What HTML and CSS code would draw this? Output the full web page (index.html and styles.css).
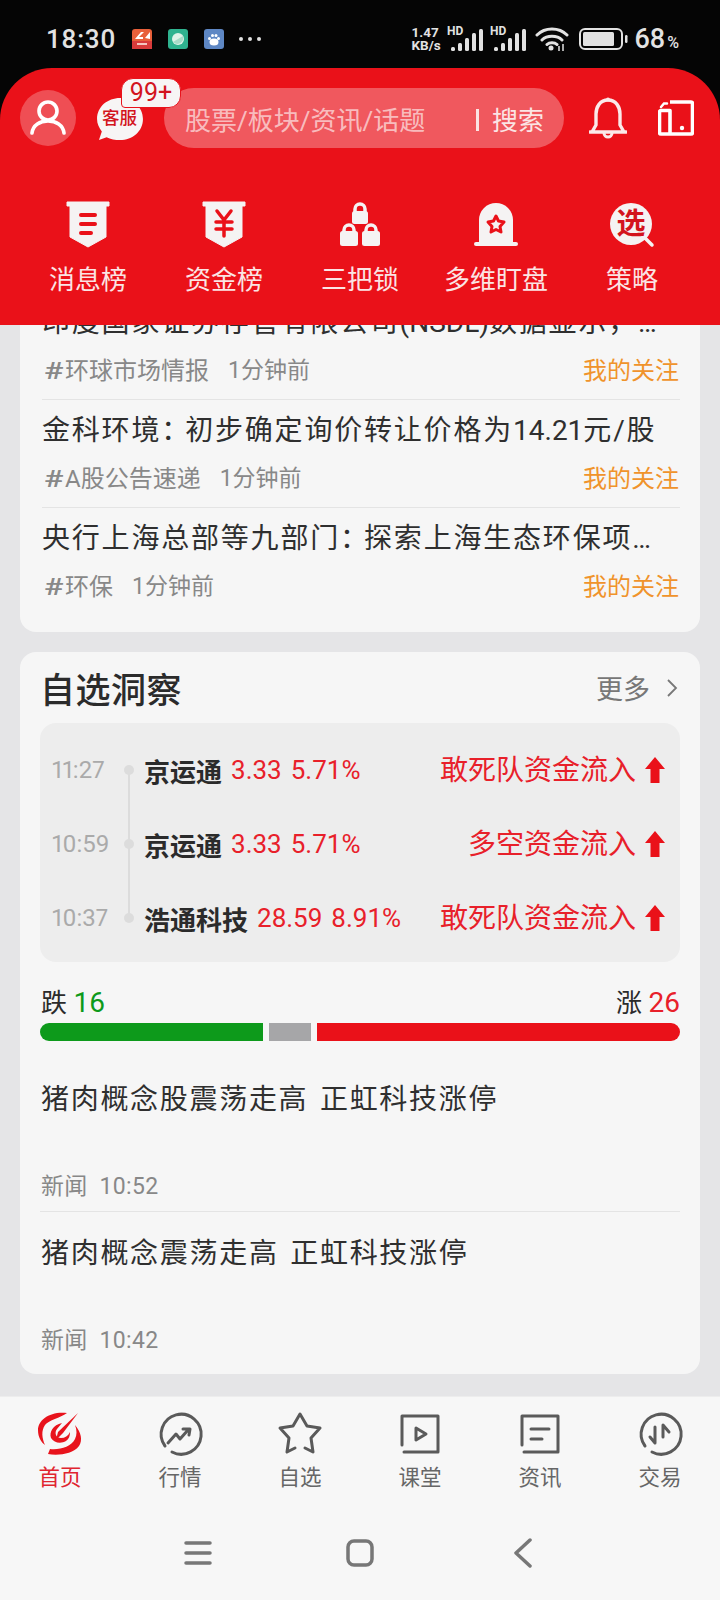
FILE: index.html
```html
<!DOCTYPE html>
<html lang="zh-CN">
<head>
<meta charset="utf-8">
<title>首页</title>
<link rel="stylesheet" href="styles.css">
</head>
<body>
<div class="phone">
  <div class="top">
    <div class="status">
      <span class="clock">18:30</span>
      <div class="apps">
        <svg class="app" viewBox="0 0 20 20"><rect width="20" height="20" rx="3" fill="#e8603a"/><rect y="12" width="20" height="8" fill="#d93b3b"/><path d="M3 10 L9 3 H12 L7 8 H11 V10 Z M13 9 L18 3 V10 Z" fill="#fff"/><rect x="5" y="14" width="10" height="2" fill="#f5c6c0"/></svg>
        <svg class="app" viewBox="0 0 20 20"><rect width="20" height="20" rx="3" fill="#2fb38f"/><circle cx="10" cy="10" r="6" fill="#dff3e8"/><path d="M5 13 A6 6 0 0 0 15 7 Z" fill="#a8dcc8"/></svg>
        <svg class="app" viewBox="0 0 20 20"><rect width="20" height="20" rx="3" fill="#5e87c4"/><ellipse cx="10" cy="13" rx="4.5" ry="3.5" fill="#fff"/><circle cx="5.5" cy="9.5" r="1.5" fill="#fff"/><circle cx="8.5" cy="6.5" r="1.5" fill="#fff"/><circle cx="12" cy="6.5" r="1.5" fill="#fff"/><circle cx="14.5" cy="9.5" r="1.5" fill="#fff"/></svg>
        <span class="dots"><i></i><i></i><i></i></span>
      </div>
      <div class="sys">
        <span class="speed">1.47<br>KB/s</span>
        <svg class="signal" viewBox="0 0 36 26"><text x="0" y="9" class="hd">HD</text><rect x="4" y="21" width="4" height="4" rx="1.5"/><rect x="11" y="17" width="4" height="8" rx="1.5"/><rect x="18" y="12" width="4" height="13" rx="1.5"/><rect x="25" y="7" width="4" height="18" rx="1.5"/><rect x="32" y="3" width="4" height="22" rx="1.5"/></svg>
        <svg class="signal" viewBox="0 0 36 26"><text x="0" y="9" class="hd">HD</text><rect x="4" y="21" width="4" height="4" rx="1.5"/><rect x="11" y="17" width="4" height="8" rx="1.5"/><rect x="18" y="12" width="4" height="13" rx="1.5"/><rect x="25" y="7" width="4" height="18" rx="1.5"/><rect x="32" y="3" width="4" height="22" rx="1.5"/></svg>
        <svg class="wifi" viewBox="0 0 34 24"><path d="M2 8 C10 0 24 0 32 8 M7 13 C12 8 22 8 27 13 M12 17.500 C14.500 15 19.500 15 22 17.500" fill="none" stroke="#e2e2e2" stroke-width="3" stroke-linecap="round"/><circle cx="16" cy="21" r="2.500" fill="#e2e2e2"/><path d="M24 19 v5 M28 17 v7" stroke="#e2e2e2" stroke-width="1.500"/></svg>
        <svg class="batt" viewBox="0 0 50 22"><rect x="1" y="1" width="42" height="20" rx="5" fill="none" stroke="#e2e2e2" stroke-width="2"/><rect x="4" y="4" width="31" height="14" rx="1.500" fill="#e2e2e2"/><rect x="46" y="7" width="2.500" height="8" rx="1.200" fill="#e2e2e2"/></svg>
        <span class="pct">68<small>%</small></span>
      </div>
    </div>
    <header class="header">
      <div class="bar">
        <div class="avatar">
          <svg viewBox="0 0 36 36"><circle cx="18" cy="11" r="9" fill="none" stroke="#fff" stroke-width="3.600"/><path d="M2 33 C3 25 10 21 18 21 C26 21 33 25 34 33" fill="none" stroke="#fff" stroke-width="3.600" stroke-linecap="round"/></svg>
        </div>
        <div class="service">
          <svg class="bubble" viewBox="0 0 50 46"><path d="M25 1 C38 1 49 10 49 23 C49 36 38 45 25 45 C20 45 15 44 11 42 L3 45 L6 36 C3 32 1 28 1 23 C1 10 12 1 25 1 Z" fill="#f7f5f5"/></svg>
          <span class="service-label">客服</span>
          <span class="badge">99+</span>
        </div>
        <div class="search">
          <span class="placeholder">股票/板块/资讯/话题</span>
          <span class="search-btn">搜索</span>
        </div>
        <svg class="bell" viewBox="0 0 38 44"><path d="M19 4 C11 4 7 11 7 18 V29 L3 36 H35 L31 29 V18 C31 11 27 4 19 4 Z M1 36 H37" fill="none" stroke="#fbe9e9" stroke-width="3.400" stroke-linejoin="round" stroke-linecap="round"/><circle cx="19" cy="3.500" r="2" fill="#fbe9e9"/><path d="M15 37 A4 4 0 0 0 23 37" fill="none" stroke="#fbe9e9" stroke-width="3"/></svg>
        <svg class="tablet" viewBox="0 0 36 36"><path d="M12 2 H33 A1.500 1.500 0 0 1 34.500 3.500 V32.500 A1.500 1.500 0 0 1 33 34 H3 A1.500 1.500 0 0 1 1.500 32.500 V12 A1.500 1.500 0 0 1 3 10.500 H12 V34" fill="none" stroke="#fff" stroke-width="3.600" stroke-linejoin="round"/><path d="M3 7 L6 3.500 H9" fill="none" stroke="#fff" stroke-width="2.500" stroke-linecap="round"/><circle cx="24" cy="28" r="2.200" fill="#fff"/></svg>
      </div>
      <nav class="grid">
        <div class="grid-item">
          <svg class="grid-icon" viewBox="0 0 44 46"><path d="M1 0 H43 V4 H40 V35 L22 45 L4 35 V4 H1 Z" fill="#f5f3f3" stroke="#f5f3f3" stroke-linejoin="round"/><path d="M15 13 H29 M15 22 H29 M15 31 H25" stroke="#ea1119" stroke-width="4" stroke-linecap="round"/></svg>
          <span>消息榜</span>
        </div>
        <div class="grid-item">
          <svg class="grid-icon" viewBox="0 0 44 46"><path d="M1 0 H43 V4 H40 V35 L22 45 L4 35 V4 H1 Z" fill="#f5f3f3" stroke="#f5f3f3" stroke-linejoin="round"/><path d="M15 9 L22 18 L29 9 M22 18 V34 M14 20 H30 M14 27 H30" fill="none" stroke="#ea1119" stroke-width="3.500" stroke-linecap="round"/></svg>
          <span>资金榜</span>
        </div>
        <div class="grid-item">
          <svg class="grid-icon" viewBox="0 0 44 46"><g fill="#f5f3f3"><rect x="14" y="9" width="16" height="13" rx="2.500"/><rect x="2" y="29" width="18" height="15" rx="2.500"/><rect x="24" y="29" width="18" height="15" rx="2.500"/></g><g fill="none" stroke="#f5f3f3" stroke-width="3.500"><path d="M17 11 V7 A5 5 0 0 1 27 7 V11"/><path d="M6 31 V28 A5 5 0 0 1 16 28 V31"/><path d="M28 31 V28 A5 5 0 0 1 38 28 V31"/></g></svg>
          <span>三把锁</span>
        </div>
        <div class="grid-item">
          <svg class="grid-icon" viewBox="0 0 44 46"><path d="M5 41 V18 A17 17 0 0 1 39 18 V41 Z" fill="#f5f3f3"/><rect y="40" width="44" height="4" rx="2" fill="#f5f3f3"/><path d="M22 14 L24.500 19 L30 20 L26 24.500 L27 30 L22 27.500 L17 30 L18 24.500 L14 20 L19.500 19 Z" fill="none" stroke="#ea1119" stroke-width="3" stroke-linejoin="round"/></svg>
          <span>多维盯盘</span>
        </div>
        <div class="grid-item">
          <svg class="grid-icon" viewBox="0 0 44 46"><path d="M35 36 L42 43" stroke="#f5f3f3" stroke-width="3.500" stroke-linecap="round"/><circle cx="21" cy="22" r="21" fill="#f5f3f3"/><text x="21" y="32" class="xuan">选</text></svg>
          <span>策略</span>
        </div>
      </nav>
    </header>
  </div>

  <main class="feed">
    <section class="card card-news">
      <article class="row">
        <h3 class="row-title">印度国家证券存管有限公司<span class="latin">(NSDL)</span>数据显示，外资持续流入</h3>
        <div class="row-meta"><span class="tag"><b>#</b>环球市场情报</span><span class="ago">1分钟前</span><span class="follow">我的关注</span></div>
      </article>
      <article class="row">
        <h3 class="row-title">金科环境<span class="colon">：</span>初步确定询价转让价格为<span class="latin">14.21</span>元/股</h3>
        <div class="row-meta"><span class="tag"><b>#</b>A股公告速递</span><span class="ago">1分钟前</span><span class="follow">我的关注</span></div>
      </article>
      <article class="row">
        <h3 class="row-title">央行上海总部等九部门<span class="colon">：</span>探索上海生态环保项目融资路径</h3>
        <div class="row-meta"><span class="tag"><b>#</b>环保</span><span class="ago">1分钟前</span><span class="follow">我的关注</span></div>
      </article>
    </section>

    <section class="card card-insight">
      <div class="insight-head">
        <h2>自选洞察</h2>
        <div class="more">更多<svg viewBox="0 0 12 20"><path d="M2 2 L10 10 L2 18" fill="none" stroke="#777" stroke-width="1.800"/></svg></div>
      </div>
      <div class="panel">
        <div class="pulse">
          <span class="time">11:27</span><i class="dot"></i><b class="stock">京运通</b><span class="num">3.33</span><span class="num">5.71%</span>
          <span class="flow">敢死队资金流入</span>
          <svg class="arrow" viewBox="0 0 20 26"><path d="M10 0 L20 12 H14.500 V26 H5.500 V12 H0 Z" fill="#ea1119"/></svg>
        </div>
        <div class="pulse">
          <span class="time">10:59</span><i class="dot"></i><b class="stock">京运通</b><span class="num">3.33</span><span class="num">5.71%</span>
          <span class="flow">多空资金流入</span>
          <svg class="arrow" viewBox="0 0 20 26"><path d="M10 0 L20 12 H14.500 V26 H5.500 V12 H0 Z" fill="#ea1119"/></svg>
        </div>
        <div class="pulse">
          <span class="time">10:37</span><i class="dot"></i><b class="stock">浩通科技</b><span class="num">28.59</span><span class="num">8.91%</span>
          <span class="flow">敢死队资金流入</span>
          <svg class="arrow" viewBox="0 0 20 26"><path d="M10 0 L20 12 H14.500 V26 H5.500 V12 H0 Z" fill="#ea1119"/></svg>
        </div>
      </div>
      <div class="breadth">
        <span>跌 <em class="down">16</em></span>
        <span>涨 <em class="up">26</em></span>
      </div>
      <div class="meter">
        <i class="seg seg-down"></i><i class="seg seg-flat"></i><i class="seg seg-up"></i>
      </div>
      <article class="news">
        <h3>猪肉概念股震荡走高 正虹科技涨停</h3>
        <p>新闻&nbsp; 10:52</p>
      </article>
      <article class="news news-last">
        <h3>猪肉概念震荡走高 正虹科技涨停</h3>
        <p>新闻&nbsp; 10:42</p>
      </article>
    </section>
  </main>

  <footer class="bottom">
    <nav class="tabs">
      <div class="tab tab-active">
        <svg viewBox="0 0 44 44"><g fill="#e8131c"><path d="M29 1 C12 -1 0 8 0 18 C0 25 3 30 7 33 C4 26 3 19 7 13 C11 8 22 6 29 1 Z"/><path d="M37 13 C43 20 45 28 41 34 C35 42 20 44 10 42 L12 37 C22 38 33 35 37 27 C39 23 39 18 37 13 Z"/><path d="M24 11 C15 13 11 20 13 26 C16 31 23 32 28 29 C31 27 32 24 32 20 C30 24 27 26 23 26 C18 26 16 21 19 17 Z"/><path d="M40 1 L20 20 L18 28 L25 21 Z"/></g></svg>
        <span>首页</span>
      </div>
      <div class="tab">
        <svg viewBox="0 0 44 44"><path d="M14 40 A20 20 0 1 0 7 34" class="ln"/><path d="M10 31 L18 22 L22 27 L30 18 M25 17 H32 L31 23" class="ln"/></svg>
        <span>行情</span>
      </div>
      <div class="tab">
        <svg viewBox="0 0 44 44"><path d="M17 36 L9 40 L11 26 L2 16 L15 14 L22 2 L29 14 L42 16 L33 26 L35 40 L27 36" class="ln"/></svg>
        <span>自选</span>
      </div>
      <div class="tab">
        <svg viewBox="0 0 44 44"><path d="M4 33 V4 H40 V40 H6" class="ln"/><path d="M18 16 L28 22 L18 28 Z" class="ln"/></svg>
        <span>课堂</span>
      </div>
      <div class="tab">
        <svg viewBox="0 0 44 44"><path d="M4 33 V4 H40 V40 H6" class="ln"/><path d="M13 17 H31 M13 27 H24" class="ln"/></svg>
        <span>资讯</span>
      </div>
      <div class="tab">
        <svg viewBox="0 0 44 44"><path d="M14 40 A20 20 0 1 0 7 34" class="ln"/><path d="M17 15 V31 L12 25 M25 25 V13 L31 20" class="ln"/></svg>
        <span>交易</span>
      </div>
    </nav>
    <div class="sysnav">
      <svg class="sys-menu" viewBox="0 0 28 26"><path d="M2 3 H26 M2 13 H26 M2 23 H26" stroke="#777" stroke-width="3.500" stroke-linecap="round"/></svg>
      <svg class="sys-home" viewBox="0 0 28 28"><rect x="2" y="2" width="24" height="24" rx="6" fill="none" stroke="#777" stroke-width="3.500"/></svg>
      <svg class="sys-back" viewBox="0 0 20 30"><path d="M17 2 L3 15 L17 28" fill="none" stroke="#777" stroke-width="3.500" stroke-linecap="round" stroke-linejoin="round"/></svg>
    </div>
  </footer>
</div>
</body>
</html>
```

FILE: styles.css
```css
* { box-sizing: border-box; }
html, body { margin: 0; padding: 0; }
body {
  width: 720px;
  height: 1600px;
  font-family: Roboto, "Noto Sans CJK SC", sans-serif;
  background: #e5e5e7;
  color: #2b2b2b;
}
h2, h3, p { margin: 0; font-weight: 400; }
i, em { font-style: normal; }

.phone { width: 720px; height: 1600px; display: flex; flex-direction: column; overflow: hidden; }

/* status bar */
.top { background: #050505; flex: none; position: relative; z-index: 2; }
.status { height: 68px; display: flex; align-items: center; padding: 20px 41px 10px 46px; color: #e2e2e2; }
.clock { font-size: 26px; font-weight: 500; letter-spacing: 0.8px; width: 86px; }
.apps { display: flex; align-items: center; gap: 16px; }
.app { width: 20px; height: 20px; display: block; }
.dots { display: flex; gap: 5px; margin-left: -1px; }
.dots i { width: 4px; height: 4px; border-radius: 50%; background: #e2e2e2; }
.sys { margin-left: auto; display: flex; align-items: center; }
.speed { font-size: 13.5px; line-height: 13px; font-weight: 700; margin-right: 5px; width: 30px; white-space: nowrap; }
.signal { width: 36px; height: 26px; fill: #e2e2e2; margin-right: 7px; display: block; overflow: visible; }
.hd { font-size: 12px; font-weight: 700; font-family: Roboto, sans-serif; fill: #e2e2e2; }
.wifi { width: 34px; height: 24px; display: block; margin-left: 2px; margin-right: 10px; }
.batt { width: 50px; height: 22px; display: block; margin-right: 6px; }
.pct { font-size: 27px; font-weight: 500; line-height: 1; }
.pct small { font-size: 16px; margin-left: 2px; }

/* header */
.header { height: 257px; background: #ea1119; border-radius: 52px 52px 0 0; display: flex; flex-direction: column; }
.bar { display: flex; align-items: center; height: 100px; padding: 0 26px 0 20px; }
.avatar { width: 56px; height: 56px; border-radius: 50%; background: rgba(255, 255, 255, 0.26); display: flex; align-items: center; justify-content: center; flex: none; }
.avatar svg { width: 36px; height: 36px; display: block; }
.service { position: relative; width: 48px; height: 44px; margin-left: 20px; margin-top: 2px; flex: none; }
.bubble { width: 48px; height: 44px; display: block; }
.service-label { position: absolute; left: 6px; top: 9px; font-size: 17.500px; line-height: 24px; font-weight: 500; color: #d3141d; white-space: nowrap; }
.badge { position: absolute; left: 25px; top: -19px; width: 60px; height: 30px; border-radius: 12px 12px 12px 4px; background: #f7f5f5; border: 1px solid #e8131c; color: #d3141d; font-size: 25px; line-height: 27px; text-align: center; }
.search { width: 400px; height: 60px; margin-left: 20px; border-radius: 30px; background: rgba(255, 255, 255, 0.3); display: flex; align-items: center; padding: 0 20px 0 21px; flex: none; font-size: 26px; }
.placeholder { color: rgba(255, 255, 255, 0.62); white-space: nowrap; }
.search-btn { margin-left: auto; color: #fbe4e4; padding-left: 13px; position: relative; white-space: nowrap; }
.search-btn::before { content: ""; position: absolute; left: -3px; top: 9px; width: 3px; height: 22px; background: #fbe4e4; }
.bell { width: 38px; height: 44px; margin-left: 25px; flex: none; display: block; }
.tablet { width: 36px; height: 36px; margin-left: 31px; flex: none; display: block; }
.grid { display: grid; grid-template-columns: repeat(5, 136px); padding: 34px 20px 0; }
.grid-item { display: flex; flex-direction: column; align-items: center; color: #fbe4e4; font-size: 26px; line-height: 32px; }
.grid-icon { width: 44px; height: 46px; display: block; margin-bottom: 16px; overflow: visible; }
.xuan { font-size: 29px; font-weight: 700; fill: #d3141d; text-anchor: middle; font-family: "Noto Sans CJK SC", sans-serif; }

/* feed */
.feed { flex: 1; min-height: 0; overflow: hidden; padding: 0 20px; display: flex; flex-direction: column; gap: 20px; }
.card { background: #f6f6f6; border-radius: 16px; flex: none; }
.card-news { margin-top: -33px; padding: 0 20px 16px 22px; }
.row { height: 108px; padding-top: 12px; border-bottom: 1px solid #e4e4e4; }
.row:last-child { border-bottom: 0; }
.row-title { font-size: 28px; line-height: 38px; height: 38px; letter-spacing: 1.8px; white-space: nowrap; overflow: hidden; text-overflow: ellipsis; color: #2f2f2f; }
.colon { font-family: "Noto Sans CJK TC", sans-serif; letter-spacing: -4px; line-height: 1; }
.latin { letter-spacing: 0; }
.row-meta { margin-top: 13px; display: flex; align-items: center; font-size: 23px; line-height: 32px; color: #888; }
.tag { font-size: 24px; padding-left: 2px; }
.tag b { font-weight: 500; display: inline-block; width: 21px; transform: scaleX(1.35); transform-origin: left center; }
.ago { margin-left: 19px; }
.follow { margin-left: auto; color: #f0932b; font-size: 24px; margin-right: 1px; }

.card-insight { height: 722px; padding: 0 20px; }
.insight-head { height: 71px; display: flex; align-items: center; justify-content: space-between; padding: 0 2px 0 0; }
.insight-head h2 { font-size: 35px; font-weight: 500; color: #2b2b2b; letter-spacing: 0.5px; }
.more { display: flex; align-items: center; gap: 16px; font-size: 27px; color: #777; }
.more svg { width: 12px; height: 20px; display: block; }

.panel { background: #ededed; border-radius: 16px; height: 239px; padding: 10px 15px 7px 12px; position: relative; }
.panel::before { content: ""; position: absolute; left: 88px; top: 47px; height: 148px; width: 2px; background: #dcdcdc; }
.pulse { height: 74px; display: flex; align-items: center; }
.time { width: 72px; font-size: 24px; color: #aaa; font-feature-settings: "pnum"; }
.dot { width: 10px; height: 10px; border-radius: 50%; background: #dcdcdc; margin-right: 10px; position: relative; }
.stock { font-size: 26px; font-weight: 700; color: #2b2b2b; margin-right: 9px; white-space: nowrap; }
.num { font-size: 26px; color: #e8202a; margin-right: 9px; }
.flow { margin-left: auto; font-size: 28px; color: #e8202a; white-space: nowrap; padding-bottom: 4px; }
.arrow { width: 20px; height: 26px; margin-left: 9px; display: block; }

.breadth { margin-top: 20px; height: 36px; display: flex; justify-content: space-between; align-items: center; font-size: 26px; color: #2b2b2b; padding: 0 0 0 1px; }
.breadth em { font-size: 28px; }
.down { color: #0d9a1b; }
.up { color: #e8202a; }
.meter { margin-top: 5px; display: flex; gap: 6px; height: 18px; }
.seg { display: block; height: 18px; }
.seg-down { width: 223px; background: #0d9a1b; border-radius: 9px 0 0 9px; }
.seg-flat { width: 42px; background: #a6a6a8; }
.seg-up { flex: 1; background: #ea1119; border-radius: 0 9px 9px 0; }

.news { padding: 40px 0 8px 1px; border-bottom: 1px solid #e4e4e4; }
.news h3 { font-size: 28px; line-height: 38px; letter-spacing: 1.7px; word-spacing: 3px; height: 90px; color: #2f2f2f; }
.news p { font-size: 23px; line-height: 32px; color: #888; letter-spacing: 0.3px; }
.news-last { padding-top: 23px; border-bottom: 0; }

/* bottom */
.bottom { height: 204px; background: #f7f7f7; border-top: 1px solid #ededed; flex: none; }
.tabs { display: grid; grid-template-columns: repeat(6, 120px); padding-top: 15px; }
.tab { display: flex; flex-direction: column; align-items: center; font-size: 21.500px; line-height: 30px; color: #666; }
.tab svg { width: 44px; height: 44px; display: block; margin-bottom: 7px; overflow: visible; }
.tab-active { color: #e02530; }
.ln { fill: none; stroke: #5a5a5a; stroke-width: 3; stroke-linejoin: round; stroke-linecap: round; }
.sysnav { position: relative; height: 60px; margin-top: 40px; }
.sysnav svg { position: absolute; display: block; }
.sys-menu { left: 184px; top: 7px; width: 28px; height: 26px; }
.sys-home { left: 346px; top: 6px; width: 28px; height: 28px; }
.sys-back { left: 513px; top: 5px; width: 20px; height: 30px; }
```
